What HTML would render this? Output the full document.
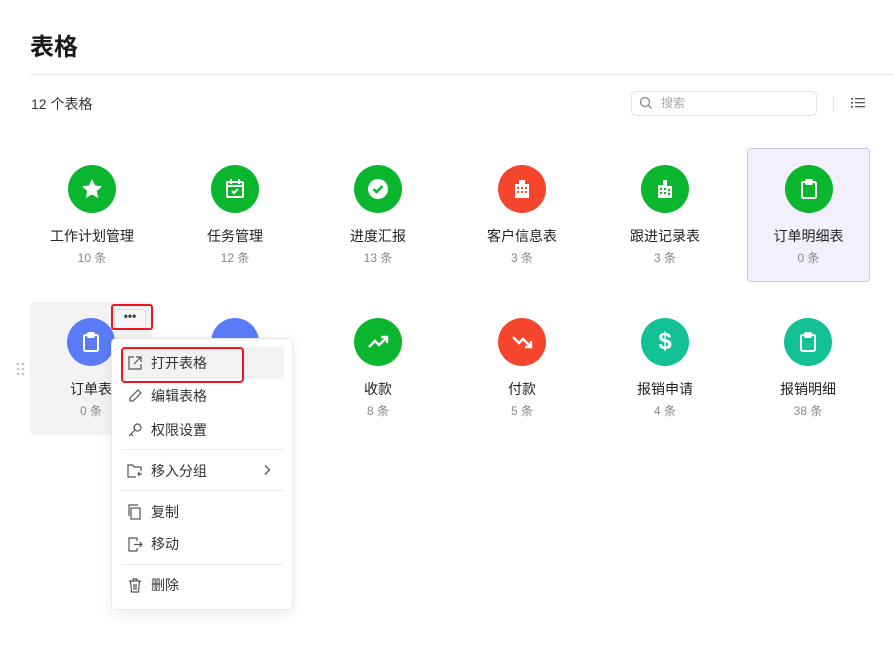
<!DOCTYPE html><html><head><meta charset="utf-8"><style>
body{margin:0;width:894px;height:672px;background:#fff;font-family:"Liberation Sans","Noto Sans CJK SC",sans-serif;position:relative;overflow:hidden;color:#1f1f1f}
.a{position:absolute}
.card{position:absolute;width:122px;height:133px;border-radius:4px;text-align:center}
.ic{position:absolute;left:37px;top:16px;width:48px;height:48px;border-radius:50%;display:flex;align-items:center;justify-content:center}
.t{position:absolute;left:-20px;right:-20px;top:77px;font-size:14px;color:#222}
.c{position:absolute;left:0;right:0;top:100px;font-size:12px;color:#888}
.g{background:#0bb62f}.r{background:#f6452d}.b{background:#5a7cf6}.tl{background:#14c196}
.mi{position:absolute;left:15px;font-size:14px;color:#333;display:flex;align-items:center;gap:8px}
.hr{position:absolute;left:9px;right:9px;height:1px;background:#eaeaea}
</style></head><body>
<div class="a" style="left:30px;top:27px;font-size:24px;font-weight:bold;color:#1a1a1a">表格</div>
<div class="a" style="left:30px;top:74px;width:864px;height:1px;background:#e5e5e5"></div>
<div class="a" style="left:31px;top:94px;font-size:14px;color:#333">12 个表格</div>
<div class="a" style="left:631px;top:91px;width:184px;height:23px;border:1px solid #e3e3e3;border-radius:5px"></div>
<svg class="a" style="left:639px;top:96px" width="14" height="14" viewBox="0 0 14 14"><circle cx="6" cy="6" r="4.5" fill="none" stroke="#888" stroke-width="1.3"/><path d="M9.5 9.5l3 3" stroke="#888" stroke-width="1.3"/></svg>
<div class="a" style="left:661px;top:94px;font-size:12px;color:#aaa">搜索</div>
<div class="a" style="left:833px;top:95px;width:1px;height:17px;background:#e5e5e5"></div>
<svg class="a" style="left:851px;top:97px" width="14" height="12" viewBox="0 0 14 12"><g fill="#555"><rect x="0" y="1" width="2" height="1.6"/><rect x="0" y="5" width="2" height="1.6"/><rect x="0" y="9" width="2" height="1.6"/><rect x="4" y="1" width="10" height="1.3"/><rect x="4" y="5" width="10" height="1.3"/><rect x="4" y="9" width="10" height="1.3"/></g></svg>

<div class="card" style="left:31px;top:149px"><div class="ic g"><svg width="24" height="24" viewBox="0 0 24 24"><path fill="#fff" d="M12 2l3 6.5 7 .8-5.2 4.8 1.5 7L12 17.5 5.7 21l1.5-7L2 9.3l7-.8z"/></svg></div><div class="t">工作计划管理</div><div class="c">10 条</div></div>
<div class="card" style="left:174px;top:149px"><div class="ic g"><svg width="24" height="24" viewBox="0 0 24 24" fill="none" stroke="#fff" stroke-width="2"><rect x="4" y="5" width="16" height="15" rx="1"/><path d="M8 2v5M16 2v5M4 9h16M9 14l2 2 4-4"/></svg></div><div class="t">任务管理</div><div class="c">12 条</div></div>
<div class="card" style="left:317px;top:149px"><div class="ic g"><svg width="24" height="24" viewBox="0 0 24 24"><circle cx="12" cy="12" r="10" fill="#fff"/><path d="M7.5 12l3 3 6-6" stroke="#0bb62f" stroke-width="2.4" fill="none"/></svg></div><div class="t">进度汇报</div><div class="c">13 条</div></div>
<div class="card" style="left:461px;top:149px"><div class="ic r"><svg width="24" height="24" viewBox="0 0 24 24" fill="#fff"><path d="M9 3h6v4h4v14H5V7h4z"/><g fill="#f6452d"><rect x="7" y="10" width="2" height="2"/><rect x="11" y="10" width="2" height="2"/><rect x="15" y="10" width="2" height="2"/><rect x="7" y="14" width="2" height="2"/><rect x="11" y="14" width="2" height="2"/><rect x="15" y="14" width="2" height="2"/></g></svg></div><div class="t">客户信息表</div><div class="c">3 条</div></div>
<div class="card" style="left:604px;top:149px"><div class="ic g"><svg width="24" height="24" viewBox="0 0 24 24" fill="#fff"><path d="M5 8h5V3h4v6h5v12H5z"/><g fill="#0bb62f"><rect x="7" y="11" width="2" height="2"/><rect x="11" y="11" width="2" height="2"/><rect x="15" y="12" width="2" height="2"/><rect x="7" y="15" width="2" height="2"/><rect x="11" y="15" width="2" height="2"/><rect x="15" y="16" width="2" height="2"/></g></svg></div><div class="t">跟进记录表</div><div class="c">3 条</div></div>
<div class="card" style="left:747px;top:148px;background:#f3f0fe;border:1px solid #cfc3f5;width:121px;height:132px"><div class="ic g"><svg width="24" height="24" viewBox="0 0 24 24" fill="none" stroke="#fff" stroke-width="2"><rect x="5" y="5" width="14" height="16" rx="1.5"/><rect x="9" y="3" width="6" height="4" rx="1" fill="#fff"/></svg></div><div class="t">订单明细表</div><div class="c">0 条</div></div>

<div class="card" style="left:30px;top:302px;background:#f3f3f3"><div class="ic b"><svg width="24" height="24" viewBox="0 0 24 24" fill="none" stroke="#fff" stroke-width="2"><rect x="5" y="5" width="14" height="16" rx="1.5"/><rect x="9" y="3" width="6" height="4" rx="1" fill="#fff"/></svg></div><div class="t">订单表</div><div class="c">0 条</div></div>
<div class="a" style="left:114px;top:309px;width:30px;height:18px;border:1px solid #e0e0e0;border-radius:4px;background:#f6f6f6;text-align:center;font-size:12px;line-height:12px;color:#444;font-weight:bold">•••</div>
<div class="a" style="left:111px;top:304px;width:38px;height:22px;border:2px solid #f0141e;border-radius:3px"></div>
<div class="a b" style="left:211px;top:318px;width:48px;height:48px;border-radius:50%"></div>
<svg class="a" style="left:16px;top:362px" width="10" height="14"><g fill="#bbb"><circle cx="2" cy="2" r="1.2"/><circle cx="7" cy="2" r="1.2"/><circle cx="2" cy="7" r="1.2"/><circle cx="7" cy="7" r="1.2"/><circle cx="2" cy="12" r="1.2"/><circle cx="7" cy="12" r="1.2"/></g></svg>
<div class="card" style="left:317px;top:302px"><div class="ic g"><svg width="24" height="24" viewBox="0 0 24 24" fill="none" stroke="#fff" stroke-width="2.4"><path d="M3 17l6-6 4 4 8-8M15 7h6v6"/></svg></div><div class="t">收款</div><div class="c">8 条</div></div>
<div class="card" style="left:461px;top:302px"><div class="ic r"><svg width="24" height="24" viewBox="0 0 24 24" fill="none" stroke="#fff" stroke-width="2.4"><path d="M3 7l6 6 4-4 8 8M15 17h6v-6"/></svg></div><div class="t">付款</div><div class="c">5 条</div></div>
<div class="card" style="left:604px;top:302px"><div class="ic tl"><div style="color:#fff;font-size:24px;font-weight:bold">$</div></div><div class="t">报销申请</div><div class="c">4 条</div></div>
<div class="card" style="left:747px;top:302px"><div class="ic tl"><svg width="24" height="24" viewBox="0 0 24 24" fill="none" stroke="#fff" stroke-width="2"><rect x="5" y="5" width="14" height="16" rx="1.5"/><rect x="9" y="3" width="6" height="4" rx="1" fill="#fff"/></svg></div><div class="t">报销明细</div><div class="c">38 条</div></div>

<div class="a" style="left:111px;top:338px;width:180px;height:270px;background:#fff;border:1px solid #e8e8e8;border-radius:5px;box-shadow:0 4px 16px rgba(0,0,0,.08)">
<div class="a" style="left:9px;top:8px;width:163px;height:32px;background:#f2f2f2;border-radius:4px"></div>
<div class="mi" style="top:14px"><svg width="16" height="16" viewBox="0 0 16 16" fill="none" stroke="#555" stroke-width="1.2"><path d="M7 2H2v12h12V9M9 2h5v5M14 2L7 9"/></svg>打开表格</div>
<div class="mi" style="top:47px"><svg width="16" height="16" viewBox="0 0 16 16" fill="none" stroke="#555" stroke-width="1.2"><path d="M11 2l3 3-8 8H3v-3z"/></svg>编辑表格</div>
<div class="mi" style="top:81px"><svg width="16" height="16" viewBox="0 0 16 16" fill="none" stroke="#555" stroke-width="1.2"><circle cx="10.5" cy="5.5" r="3.5"/><path d="M8 8l-6 6M4 12l2 2"/></svg>权限设置</div>
<div class="hr" style="top:110px"></div>
<div class="mi" style="top:122px"><svg width="16" height="16" viewBox="0 0 16 16" fill="none" stroke="#555" stroke-width="1.2"><path d="M14 8V4H7L5.5 2H1v12h8M15 11h-4M12.5 9L11 11l1.5 2"/></svg>移入分组</div>
<svg class="a" style="left:150px;top:125px" width="10" height="12" viewBox="0 0 10 12"><path d="M3 1.5l4.5 4.5L3 10.5" fill="none" stroke="#555" stroke-width="1.3"/></svg>
<div class="hr" style="top:151px"></div>
<div class="mi" style="top:163px"><svg width="16" height="16" viewBox="0 0 16 16" fill="none" stroke="#555" stroke-width="1.2"><rect x="4" y="4" width="9" height="11"/><path d="M2 12V1h9"/></svg>复制</div>
<div class="mi" style="top:195px"><svg width="16" height="16" viewBox="0 0 16 16" fill="none" stroke="#555" stroke-width="1.2"><path d="M10 5V2H2v13h8v-3M7 8.5h8M12.5 6l2.5 2.5-2.5 2.5"/></svg>移动</div>
<div class="hr" style="top:225px"></div>
<div class="mi" style="top:236px"><svg width="16" height="16" viewBox="0 0 16 16" fill="none" stroke="#555" stroke-width="1.2"><path d="M2 4h12M6 4V2h4v2M3.5 4l1 11h7l1-11M7 7v6M9 7v6"/></svg>删除</div>
</div>
<div class="a" style="left:121px;top:347px;width:119px;height:32px;border:2px solid #f0141e;border-radius:4px"></div>
</body></html>
